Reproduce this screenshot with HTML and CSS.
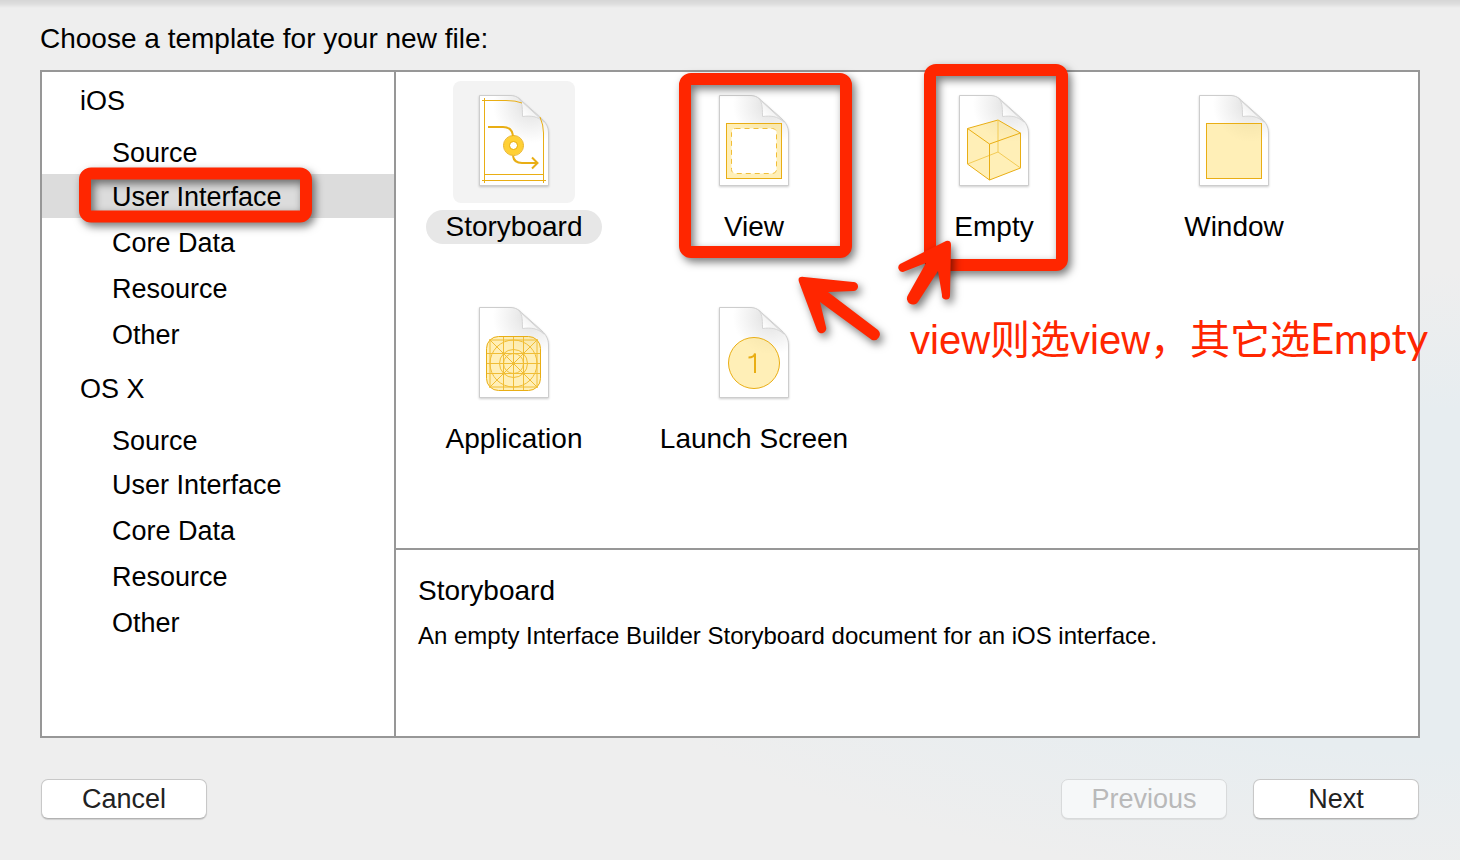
FILE: index.html
```
<!DOCTYPE html>
<html lang="en">
<head>
<meta charset="utf-8">
<title>New File</title>
<link rel="stylesheet" href="styles.css">
</head>
<body>
<svg class="defs" width="0" height="0" aria-hidden="true">
  <defs>
    <linearGradient id="fold" x1="70" y1="35" x2="80" y2="25" gradientUnits="userSpaceOnUse">
      <stop offset="0" stop-color="#fff"/><stop offset="1" stop-color="#ededed"/>
    </linearGradient>
    <radialGradient id="shade" cx="78" cy="24" r="38" gradientUnits="userSpaceOnUse">
      <stop offset="0" stop-color="#dcdcdc"/><stop offset=".4" stop-color="#ececec"/><stop offset="1" stop-color="#fff"/>
    </radialGradient>
    <symbol id="page" viewBox="0 0 122 122">
      <path class="page-body" d="M26.500 14.500H57C63 14.500 66 17 70 21L89 38C93 42 95.500 46 95.500 52V104.500H26.500Z"/>
      <path class="page-fold" d="M65 17C69 20 69.500 25 69.500 35.500C78 34.500 84 35 91 41Z"/>
    </symbol>
  </defs>
</svg>
<main class="dialog">
  <h1 class="title">Choose a template for your new file:</h1>
  <div class="panel">
    <nav class="sidebar" aria-label="Categories">
      <h2 class="group">iOS</h2>
      <ul class="list">
        <li><a href="#">Source</a></li>
        <li><a class="selected" href="#" aria-current="true">User Interface</a></li>
        <li><a href="#">Core Data</a></li>
        <li><a href="#">Resource</a></li>
        <li><a href="#">Other</a></li>
      </ul>
      <h2 class="group group-next">OS X</h2>
      <ul class="list">
        <li><a href="#">Source</a></li>
        <li><a href="#">User Interface</a></li>
        <li><a href="#">Core Data</a></li>
        <li><a href="#">Resource</a></li>
        <li><a href="#">Other</a></li>
      </ul>
    </nav>
    <div class="content">
      <section class="templates" aria-label="Templates">
        <button class="template chosen" type="button">
          <svg class="icon" viewBox="0 0 122 122" aria-hidden="true">
            <use href="#page"/>
            <path class="thin" d="M31.500 17V102M29 19.500H53Q63 19.500 69 22M87 36Q90.500 44 90.500 52V102M29 99.500H93M32 93.500H90"/>
            <path class="flow" d="M35 46H50Q60 46 60 57M60 75Q61 82 69 82H84M79 76.500L84.500 82L79 87.500"/>
            <circle class="ring" cx="60.500" cy="64.500" r="6.700"/>
            <circle class="ring-edge" cx="60.500" cy="64.500" r="10"/>
            <circle class="ring-edge" cx="60.500" cy="64.500" r="4"/>
          </svg>
          <span class="label">Storyboard</span>
        </button>
        <button class="template" type="button">
          <svg class="icon" viewBox="0 0 122 122" aria-hidden="true">
            <use href="#page"/>
            <rect class="tint" x="33.500" y="42.500" width="55" height="55"/>
            <rect class="hole" x="38.500" y="47.500" width="45" height="45" rx="4"/>
          </svg>
          <span class="label">View</span>
        </button>
        <button class="template" type="button">
          <svg class="icon" viewBox="0 0 122 122" aria-hidden="true">
            <use href="#page"/>
            <path class="tint" d="M34.500 47.500L65 39L87.500 52V87L56.500 99L34.500 83Z"/>
            <path class="faint" d="M65 39V71L34.500 83M65 71L87.500 87"/>
            <path class="line" d="M34.500 47.500L56.500 63L87.500 52M56.500 63V99"/>
          </svg>
          <span class="label">Empty</span>
        </button>
        <button class="template" type="button">
          <svg class="icon" viewBox="0 0 122 122" aria-hidden="true">
            <use href="#page"/>
            <rect class="tint" x="33.500" y="42.500" width="55" height="55"/>
          </svg>
          <span class="label">Window</span>
        </button>
        <button class="template" type="button">
          <svg class="icon" viewBox="0 0 122 122" aria-hidden="true">
            <use href="#page"/>
            <rect class="tint" x="33.500" y="43.500" width="54" height="54" rx="12"/>
            <path class="grid-lines" d="M37 46V95M50.500 44V97M60.500 44V97M70.500 44V97M84 46V95M36 47H85M34 60.500H87M34 70.500H87M34 80.500H87M36 94H85M37 47L84 94M84 47L37 94"/>
            <g class="grid-lines"><circle cx="60.500" cy="70.500" r="23.500"/><circle cx="60.500" cy="70.500" r="14"/><circle cx="60.500" cy="70.500" r="10"/></g>
          </svg>
          <span class="label">Application</span>
        </button>
        <button class="template" type="button">
          <svg class="icon" viewBox="0 0 122 122" aria-hidden="true">
            <use href="#page"/>
            <circle class="tint" cx="61" cy="70" r="25.500"/>
            <path class="numeral" d="M55.500 64.500Q61 64.500 62 60.500V80"/>
          </svg>
          <span class="label">Launch Screen</span>
        </button>
      </section>
      <section class="detail">
        <h2 class="detail-title">Storyboard</h2>
        <p class="detail-text">An empty Interface Builder Storyboard document for an iOS interface.</p>
      </section>
    </div>
  </div>
  <footer class="actions">
    <button class="button" type="button">Cancel</button>
    <span class="spacer"></span>
    <button class="button" type="button" disabled>Previous</button>
    <button class="button" type="button">Next</button>
  </footer>
  <svg class="marks" width="1120" height="400" viewBox="0 0 1120 400" aria-hidden="true">
    <g class="mark"><rect x="85" y="173.500" width="221" height="43" rx="6"/></g>
    <g class="mark"><rect x="685" y="79" width="161" height="173" rx="6"/></g>
    <g class="mark"><rect x="930" y="70" width="132" height="195" rx="6"/></g>
    <path class="arrow" d="M804 277L853 282A4.500 4.500 0 0 1 854 291L828 292L878 330A6 6 0 0 1 872 340L820 302L826 327A4.500 4.500 0 0 1 817 330L799 282Q797 276 804 277Z"/>
    <path class="arrow" d="M946 241L900 264A4.500 4.500 0 0 0 903 272L926 263L908 295A6 6 0 0 0 918 302L938 271L942 295A4 4 0 0 0 950 296L951 245Q951 240 946 241Z"/>
  </svg>
  <p class="note" lang="zh">view<span class="han">则选</span>view<span class="han">，其它选</span><span class="round">Empty</span></p>
</main>
</body>
</html>
```
FILE: styles.css
```
* { box-sizing: border-box; }

body {
  margin: 0;
  background: #eee;
  color: #000;
  font: 27px/32px "Liberation Sans", Arial, sans-serif;
}

.defs { position: absolute; }

h1, h2, p, ul { margin: 0; padding: 0; font: inherit; }
button { font: inherit; color: inherit; }

.dialog {
  position: relative;
  display: flex;
  flex-direction: column;
  min-height: 100vh;
  padding: 0 40px;
  background:
    linear-gradient(#d6d6d6, #dedede 4px, #eee0 8px),
    radial-gradient(ellipse 900px 310px at 100% 580px, #e7edf0 55%, #eee0 100%),
    #eee;
}

.title { padding: 23px 0 15px; font-size: 28px; }

.panel {
  flex: 1;
  display: grid;
  grid-template-columns: 354px minmax(0, 1fr);
  border: 2px solid #979797;
  background: #fff;
}

.sidebar { border-right: 2px solid #979797; }
.group { padding: 13px 38px; }
.group-next { padding: 17px 38px 13px; }

.list {
  display: flex;
  flex-direction: column;
  gap: 2px;
  list-style: none;
}
.list li:nth-child(2) { margin-top: -2px; }
.list a {
  display: block;
  height: 44px;
  padding-left: 70px;
  line-height: 46px;
  color: inherit;
  text-decoration: none;
}
.list .selected { background: #dcdcdc; }

.content { display: flex; flex-direction: column; }

.templates {
  flex: 1;
  display: grid;
  grid-template-columns: repeat(auto-fill, 196px);
  align-content: start;
  gap: 49px 44px;
  padding: 9px 20px;
}
.template {
  display: flex;
  flex-direction: column;
  align-items: center;
  gap: 7px;
  padding: 0;
  border: 0;
  background: none;
}
.icon { width: 122px; height: 122px; border-radius: 8px; }
.label {
  padding: 0 20px;
  border-radius: 17px;
  font-size: 28px;
  line-height: 34px;
  white-space: nowrap;
}
.template.chosen .icon { background: #f3f3f3; }
.template.chosen .label { background: #e7e7e7; }
.template:nth-child(n+5) .label { padding: 0; }

.page-body { fill: url(#shade); stroke: #cdcdcd; filter: drop-shadow(0 1px 1px #0003); }
.page-fold { fill: url(#fold); stroke: #d6d6d6; }
.tint { fill: #ffdf7080; stroke: #e9ae14; }
.line, .thin, .faint, .grid-lines { fill: none; stroke: #e9ae14; }
.faint { stroke: #f3cb55; }
.grid-lines { stroke: #f0bd35; }
.hole { fill: #fff; stroke: #f1be38; stroke-dasharray: 5 4; }
.flow { fill: none; stroke: #e9ae14; stroke-width: 2; }
.ring { fill: none; stroke: #ffd035; stroke-width: 6; }
.ring-edge { fill: none; stroke: #e9ae14; }
.numeral { fill: none; stroke: #e9ae14; stroke-width: 2; }

.detail {
  min-height: 188px;
  padding: 25px 22px;
  border-top: 2px solid #979797;
}
.detail-title { font-size: 28px; }
.detail-text { padding-top: 13px; font-size: 24px; }

.actions {
  display: flex;
  gap: 26px;
  padding: 41px 1px;
}
.spacer { flex: 1; }
.button {
  width: 166px;
  height: 40px;
  padding: 0;
  border: 1px solid #c8c8c8;
  border-bottom-color: #b2b2b2;
  border-radius: 7px;
  background: #fff;
  box-shadow: 0 1px 1px #0002;
  color: #222;
}
.button:disabled {
  border-color: #d8dadb;
  background: #f6f8f9;
  box-shadow: 0 1px 1px #0001;
  color: #b9b9b9;
}

.marks { position: absolute; top: 0; left: 0; pointer-events: none; }
.mark, .arrow { filter: drop-shadow(3px 4px 4px #0008); }
.mark { fill: none; stroke: #ff2600; stroke-width: 12; }
.arrow { fill: #ff2600; }

.note {
  position: absolute;
  top: 316px;
  left: 910px;
  color: #ff2600;
  font-size: 40px;
  line-height: 48px;
  white-space: nowrap;
  pointer-events: none;
}
.han { font-family: "Noto Sans CJK SC", sans-serif; line-height: 40px; }
.round { font-family: Lato, sans-serif; font-size: 42px; line-height: 40px; }
```
